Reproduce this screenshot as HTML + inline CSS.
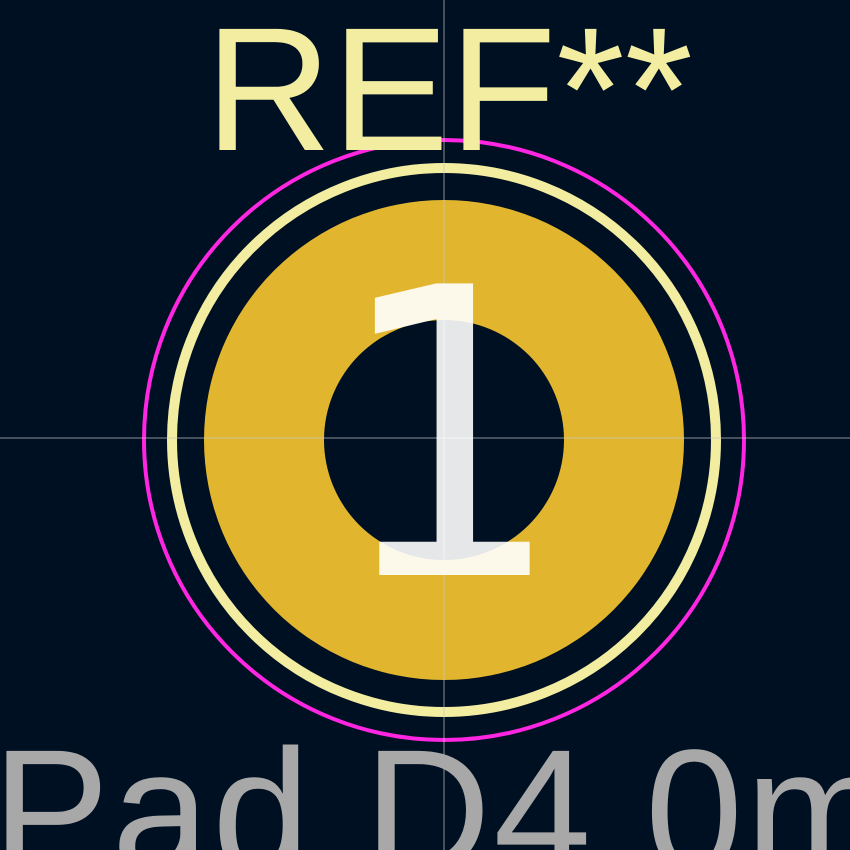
<!DOCTYPE html>
<html><head><style>html,body{margin:0;padding:0;width:850px;height:850px;background:#001023;overflow:hidden}svg{display:block;overflow:hidden}</style></head>
<body>
<svg width="850" height="850" viewBox="0 0 850 850" xmlns="http://www.w3.org/2000/svg">
<rect width="850" height="850" fill="#001023"/>
<circle cx="444" cy="440" r="240" fill="#e1b62e"/>
<circle cx="444" cy="440" r="120" fill="#001023"/>
<circle cx="444" cy="440" r="272" fill="none" stroke="#f2eda1" stroke-width="10"/>
<circle cx="444" cy="440" r="300" fill="none" stroke="#ff26e2" stroke-width="4"/>
<line x1="444" y1="0" x2="444" y2="850" stroke="#c8c8c8" stroke-width="1" opacity="0.7"/>
<line x1="0" y1="438" x2="850" y2="438" stroke="#c8c8c8" stroke-width="1" opacity="0.7"/>
<text x="205" y="150" font-family="Liberation Sans, sans-serif" font-size="176" fill="#f2eda1" textLength="488" lengthAdjust="spacingAndGlyphs">REF**</text>
<text x="330" y="575" font-family="DejaVu Sans Mono, monospace" font-size="400" fill="rgba(255,255,255,0.9)" textLength="225" lengthAdjust="spacingAndGlyphs">1</text>
<text x="-8" y="872" font-family="Liberation Sans, sans-serif" font-size="176" fill="#a8a8a8" textLength="900" lengthAdjust="spacing">Pad D4.0m</text>
</svg>
</body></html>
